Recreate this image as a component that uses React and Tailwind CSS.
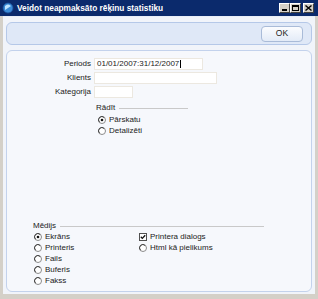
import React from "react";

const font = { fontFamily: '"Liberation Sans", Arial, sans-serif' };

function Radio({ checked }) {
  return (
    <svg width="8" height="8" viewBox="0 0 8 8" className="shrink-0">
      <circle cx="4" cy="4" r="3.5" fill="#fff" stroke="#8a8a8a" strokeWidth="1" />
      <path d="M1.5 6.2 A3 3 0 0 1 6.2 1.5" fill="none" stroke="#404040" strokeWidth="1" />
      {checked && <circle cx="4" cy="4" r="1.3" fill="#111" />}
    </svg>
  );
}

function Check({ checked }) {
  return (
    <svg width="8" height="8" viewBox="0 0 8 8" className="shrink-0">
      <rect x="0.5" y="0.5" width="7" height="7" fill="#fff" stroke="#505050" />
      {checked && <path d="M1.8 3.8 L3.3 5.4 L6.2 2.2" fill="none" stroke="#111" strokeWidth="1.3" />}
    </svg>
  );
}

function RadioRow({ label, checked }) {
  return (
    <div className="flex items-center gap-[3px] h-[11px]">
      <Radio checked={checked} />
      <span>{label}</span>
    </div>
  );
}

export default function App() {
  return (
    <div
      className="w-[318px] h-[299px] bg-[#d4d0c8] flex flex-col text-[8px] text-[#222] leading-none"
      style={font}
    >
      {/* title bar */}
      <div className="h-[16px] bg-[#0b2a6c] flex items-center pl-[2px] pr-[4px] shrink-0">
        <svg width="12" height="12" viewBox="0 0 12 12" className="mr-[3px]">
          <circle cx="6" cy="6" r="5" fill="#3a8ad6" />
          <path d="M3 4 Q6 1 9 4 Q6 6 3 8 Z" fill="#bfe3ff" />
          <circle cx="6" cy="6" r="5" fill="none" stroke="#1a4f9a" strokeWidth="0.8" />
        </svg>
        <span className="text-white font-bold text-[8.3px]">Veidot neapmaksāto rēķinu statistiku</span>
        <div className="ml-auto flex items-center">
          <div className="w-[11px] h-[10px] bg-[#d4d0c8] border border-t-white border-l-white border-r-[#404040] border-b-[#404040] flex items-end justify-center pb-[1px]">
            <div className="w-[5px] h-[2px] bg-black" />
          </div>
          <div className="w-[11px] h-[10px] bg-[#d4d0c8] border border-t-white border-l-white border-r-[#404040] border-b-[#404040] flex items-center justify-center">
            <div className="w-[7px] h-[6px] border border-black border-t-2" />
          </div>
          <div className="w-[11px] h-[10px] ml-[2px] bg-[#d4d0c8] border border-t-white border-l-white border-r-[#404040] border-b-[#404040] flex items-center justify-center">
            <svg width="7" height="6" viewBox="0 0 7 6">
              <path d="M0.5 0.5 L6.5 5.5 M6.5 0.5 L0.5 5.5" stroke="#000" strokeWidth="1.4" />
            </svg>
          </div>
        </div>
      </div>

      {/* client area */}
      <div className="flex-1 mx-[3px] mb-[5px] bg-[#f1f4fa] flex flex-col px-[3px] pt-[5px] pb-[2px] gap-[5px] border-t border-[#e8eef8]">
        {/* toolbar */}
        <div className="h-[23px] shrink-0 rounded-[6px] border border-[#b5c8e8] bg-[#dfe8f7] flex items-center justify-end pr-[8px]">
          <div className="w-[42px] h-[16px] rounded-[4px] border border-[#a9bbd8] bg-gradient-to-b from-[#fbfcfe] to-[#e3ebf7] flex items-center justify-center text-[8.5px] text-[#222]">
            OK
          </div>
        </div>

        {/* main panel */}
        <div className="flex-1 rounded-[6px] border border-[#c3d2ec] bg-[#f6f8fc] relative flex flex-col">
          <div className="pt-[7px] flex flex-col gap-[2px]">
            <div className="flex items-center h-[12px]">
              <span className="w-[87px] text-right pr-[3px]">Periods</span>
              <div className="w-[109px] h-[12px] bg-white border border-[#ece8e0] flex items-center pl-[2px]">
                01/01/2007:31/12/2007<span className="w-[1px] h-[8px] bg-black ml-[1px]" />
              </div>
            </div>
            <div className="flex items-center h-[12px]">
              <span className="w-[87px] text-right pr-[3px]">Klients</span>
              <div className="w-[123px] h-[12px] bg-white border border-[#ece8e0]" />
            </div>
            <div className="flex items-center h-[12px]">
              <span className="w-[87px] text-right pr-[3px]">Kategorija</span>
              <div className="w-[39px] h-[12px] bg-white border border-[#ece8e0]" />
            </div>
          </div>

          <div className="ml-[89px] mt-[5px] w-[92px]">
            <div className="flex items-center gap-[4px] h-[10px]">
              <span>Rādīt</span>
              <div className="flex-1 h-px bg-[#c9c9c9]" />
            </div>
            <div className="ml-[2px] mt-[1px] flex flex-col">
              <RadioRow label="Pārskatu" checked />
              <RadioRow label="Detalizēti" />
            </div>
          </div>

          <div className="mt-auto mb-[5px] ml-[26px] w-[231px]">
            <div className="flex items-center gap-[4px] h-[10px]">
              <span>Mēdijs</span>
              <div className="flex-1 h-px bg-[#c9c9c9]" />
            </div>
            <div className="flex ml-[1px]">
              <div className="w-[105px] flex flex-col">
                <RadioRow label="Ekrāns" checked />
                <RadioRow label="Printeris" />
                <RadioRow label="Fails" />
                <RadioRow label="Buferis" />
                <RadioRow label="Fakss" />
              </div>
              <div className="flex flex-col">
                <div className="flex items-center gap-[3px] h-[11px]">
                  <Check checked />
                  <span>Printera dialogs</span>
                </div>
                <RadioRow label="Html kā pielikums" />
              </div>
            </div>
          </div>
        </div>
      </div>
    </div>
  );
}
